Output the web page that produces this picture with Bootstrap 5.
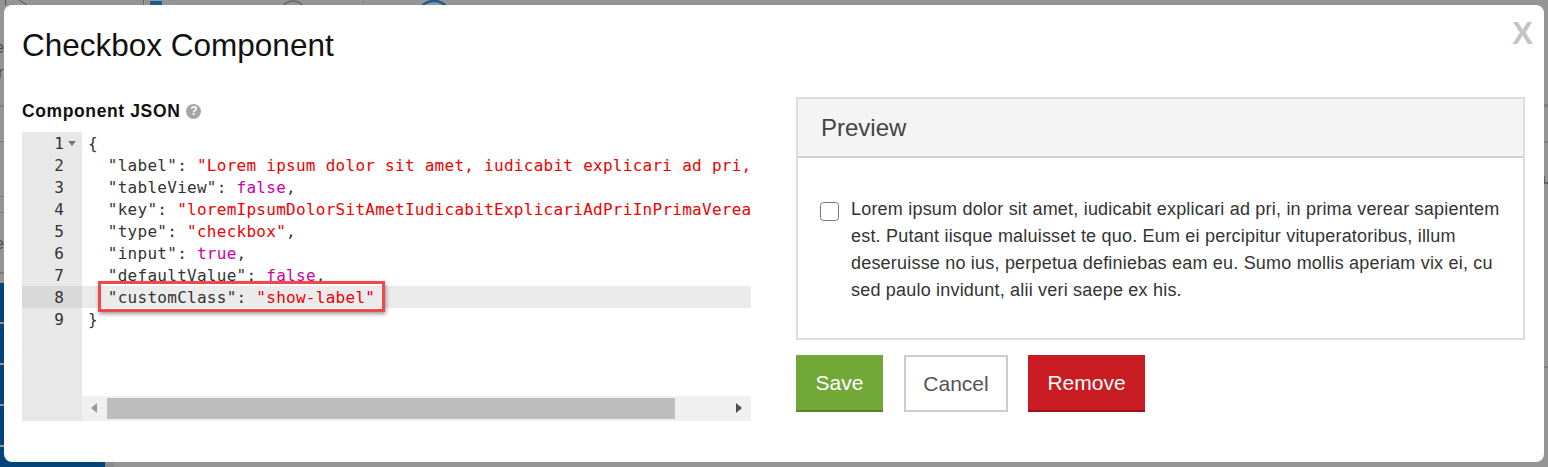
<!DOCTYPE html>
<html lang="en">
<head>
<meta charset="utf-8">
<title>Checkbox Component</title>
<link href="https://cdn.jsdelivr.net/npm/bootstrap@5.3.0/dist/css/bootstrap.min.css" rel="stylesheet">
<style>
html,body{height:467px;overflow:hidden}
body{background:#959595;font-family:"Liberation Sans",Arial,sans-serif;position:relative}
.bg-blue{background:#03437a}
.bg-side{width:105px;height:184px;margin-top:283px}
.bg-art{position:absolute;left:0;top:0}
.bg-art text{font-size:16px;fill:#4a4a4a;font-family:"Liberation Sans",Arial,sans-serif}
.dlg{position:absolute;left:4px;top:5px;width:1540px;height:457px;background:#fff;border-radius:8px;color:#000}
.dlg-title{font-size:31.5px;line-height:36px;font-weight:400;margin:0;padding:22px 18px 0;color:#111}
.dlg-x{position:absolute;right:11px;top:14px;font-size:31px;line-height:30px;font-weight:700;color:#c4c4c4}
.dlg-body{padding:34px 19px 0 18px;gap:45px}
.col-code{width:729px;flex:none;padding-top:4px}
.col-prev{flex:1 1 auto;min-width:0}
.lbl{font-size:17.5px;line-height:20px;font-weight:700;letter-spacing:.62px;margin:0 0 11px;color:#111;display:flex;align-items:center;gap:6px;height:20px}
.help{width:15px;height:15px;border-radius:50%;background:#a5a5a5;color:#fff;font-size:12px;line-height:15px;text-align:center;font-weight:700;letter-spacing:0}
.editor{height:289px;position:relative;overflow:hidden;font-family:"DejaVu Sans Mono",Consolas,monospace}
.gutter{width:60px;background:#e8e8e8;color:#333;text-align:right;flex:none;font-size:16px;padding:0 18px 0 0}
.fold{position:absolute;left:46px;top:9px;border:4px solid transparent;border-top:5px solid #777;border-bottom:0}
.code{flex:1 1 auto;min-width:0;font-size:16px;letter-spacing:.27px;padding:0 0 0 6px;color:#333}
.ln{height:22px;line-height:24px;white-space:pre}
.active-line{position:absolute;left:0;right:0;top:154px;height:22px;background:#ebebeb}
.active-gut{position:absolute;left:0;width:60px;top:154px;height:22px;background:#d9d9d9}
.cl{position:relative}
.s{color:#f00000}.k{color:#cc00aa}
.hl{position:absolute;left:76px;top:149px;width:287px;height:31px;border:3px solid #f2474b;box-shadow:1px 2px 4px rgba(0,0,0,.4)}
.sb{position:absolute;left:60px;right:0;bottom:0;height:25px;background:#f0f0f0}
.sb-thumb{position:absolute;left:25px;top:2px;width:568px;height:21px;background:#bebebe}
.arr-l,.arr-r{position:absolute;top:7px;border:5.5px solid transparent}
.arr-l{left:9px;border-left:0;border-right:6px solid #999}
.arr-r{right:9px;border-right:0;border-left:6px solid #505050}
.pv{border:2px solid #ddd;background:#fff;height:243px}
.pv-head{background:#f4f4f4;border-bottom:2px solid #d2d2d2;height:59px;font-size:24px;line-height:57px;padding-left:23px;color:#444}
.pv-body{padding:38px 23px 0 22px;color:#333;font-size:18px;letter-spacing:.2px;line-height:27px;gap:12px}
.cb{flex:none;width:19px;height:19px;border:1px solid #767676;border-radius:3.5px;background:#fff;margin-top:6px}
.acts{gap:20px;margin-top:15px}
.b{display:block;height:57px;border:0;border-radius:0;font-size:21px;line-height:55px;padding:0;text-align:center}
.b-save{width:87px;background:#72a838;color:#fff;border-bottom:2px solid #55842a}
.b-cancel{width:104px;background:#fff;color:#555;border:2px solid #ccc;line-height:53px;margin-left:1px}
.b-rem{width:117px;background:#c81c22;color:#fff;border-bottom:2px solid #9c1419}
</style>
</head>
<body>
<div class="bg-blue bg-side"></div>
<svg class="bg-art" width="1548" height="467" viewBox="0 0 1548 467" aria-hidden="true">
  <text x="-5" y="53">e</text><text x="-2" y="78">r</text><text x="-5" y="249">e</text>
  <g fill="#7d7d7d">
    <rect x="0" y="105" width="4" height="2"/><rect x="0" y="141" width="4" height="1"/><rect x="0" y="196" width="4" height="1"/><rect x="0" y="212" width="4" height="1"/><rect x="0" y="272" width="4" height="2"/>
    <rect x="1544" y="104" width="4" height="3"/><rect x="1544" y="141" width="4" height="2"/><rect x="1544" y="366" width="4" height="2"/>
  </g>
  <g fill="#959595">
    <rect x="0" y="322" width="4" height="2"/><rect x="0" y="363" width="4" height="2"/><rect x="0" y="404" width="4" height="2"/><rect x="0" y="445" width="4" height="2"/>
  </g>
  <rect x="105" y="462" width="9" height="5" fill="#8a8a8a"/>
  <rect x="5" y="0" width="1" height="5" fill="#555"/>
  <path d="M19 0l8 5" stroke="#555" fill="none"/>
  <rect x="143" y="0" width="1" height="5" fill="#666"/>
  <rect x="150" y="1" width="12" height="4" fill="#1d5c90"/>
  <rect x="363" y="0" width="1" height="5" fill="#888"/>
  <circle cx="293" cy="14" r="13" fill="none" stroke="#666" stroke-width="1.5"/>
  <circle cx="434" cy="18" r="17" fill="none" stroke="#1d5c90" stroke-width="2.5"/>
  <path d="M1544 176v7h4" stroke="#333" fill="none"/>
</svg>
<div class="dlg">
  <h4 class="dlg-title">Checkbox Component</h4>
  <div class="dlg-x">X</div>
  <div class="dlg-body d-flex">
    <div class="col-code">
      <div class="lbl">Component JSON <span class="help">?</span></div>
      <div class="editor d-flex">
        <div class="active-line"></div>
        <div class="gutter cl"><div class="active-gut"></div>
          <div class="ln cl">1</div><div class="ln cl">2</div><div class="ln cl">3</div><div class="ln cl">4</div><div class="ln cl">5</div><div class="ln cl">6</div><div class="ln cl">7</div><div class="ln cl">8</div><div class="ln cl">9</div>
        </div>
        <div class="code cl">
          <div class="ln">{</div>
          <div class="ln">  "label": <span class="s">"Lorem ipsum dolor sit amet, iudicabit explicari ad pri,</span></div>
          <div class="ln">  "tableView": <span class="k">false</span>,</div>
          <div class="ln">  "key": <span class="s">"loremIpsumDolorSitAmetIudicabitExplicariAdPriInPrimaVerea</span></div>
          <div class="ln">  "type": <span class="s">"checkbox"</span>,</div>
          <div class="ln">  "input": <span class="k">true</span>,</div>
          <div class="ln">  "defaultValue": <span class="k">false</span>,</div>
          <div class="ln">  "customClass": <span class="s">"show-label"</span></div>
          <div class="ln">}</div>
        </div>
        <div class="hl"></div>
        <div class="fold"></div>
        <div class="sb"><span class="arr-l"></span><div class="sb-thumb"></div><span class="arr-r"></span></div>
      </div>
    </div>
    <div class="col-prev">
      <div class="pv">
        <div class="pv-head">Preview</div>
        <div class="pv-body d-flex"><span class="cb"></span><div>Lorem ipsum dolor sit amet, iudicabit explicari ad pri, in prima verear sapientem est. Putant iisque maluisset te quo. Eum ei percipitur vituperatoribus, illum deseruisse no ius, perpetua definiebas eam eu. Sumo mollis aperiam vix ei, cu sed paulo invidunt, alii veri saepe ex his.</div></div>
      </div>
      <div class="acts d-flex">
        <button class="b b-save">Save</button>
        <button class="b b-cancel">Cancel</button>
        <button class="b b-rem">Remove</button>
      </div>
    </div>
  </div>
</div>
<script src="https://cdn.jsdelivr.net/npm/bootstrap@5.3.0/dist/js/bootstrap.bundle.min.js"></script>
</body>
</html>
